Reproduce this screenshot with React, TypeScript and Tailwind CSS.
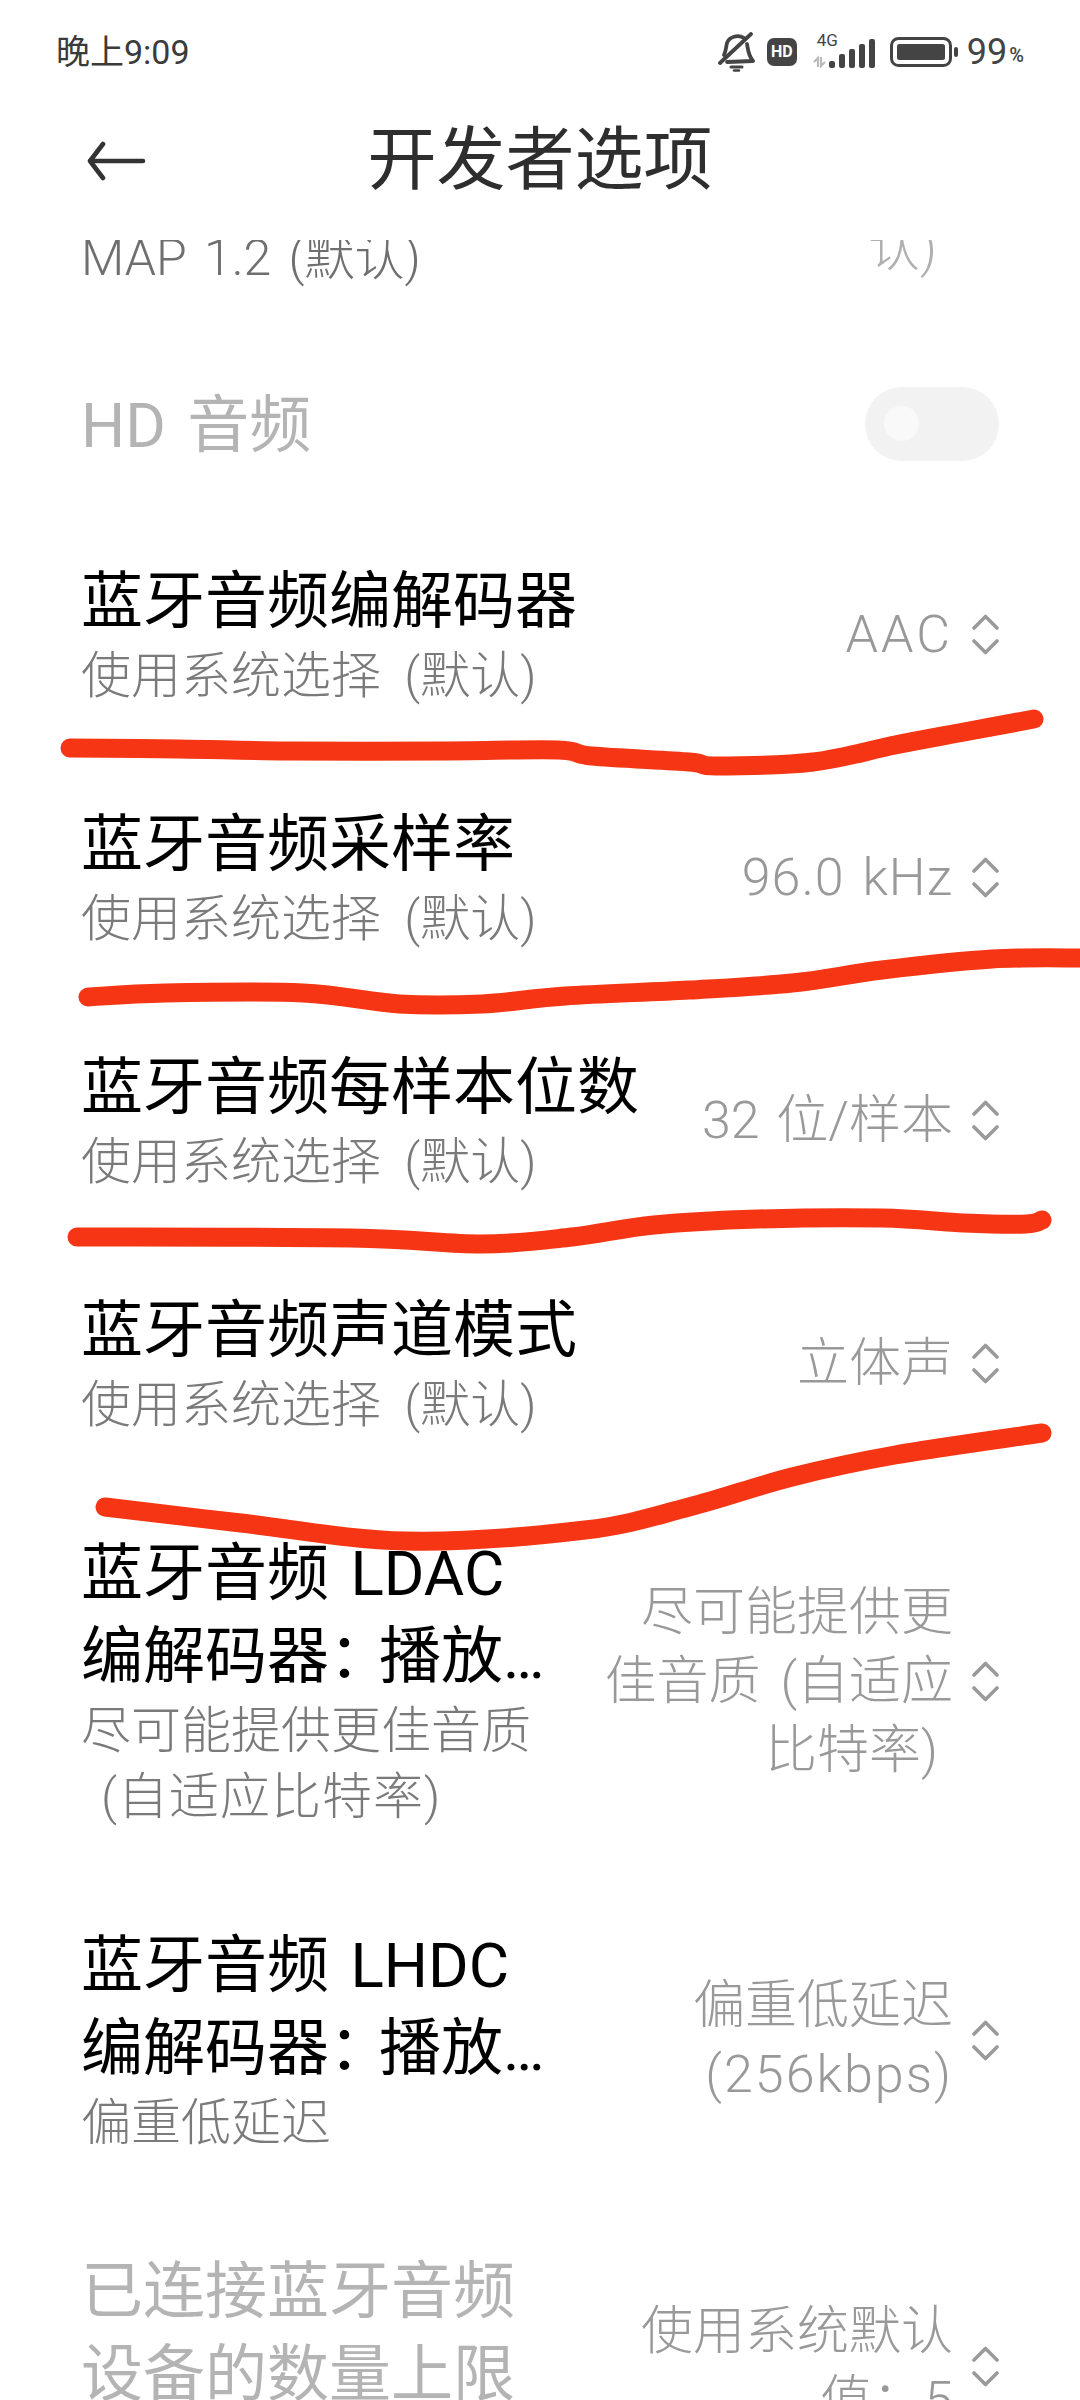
import React from "react";

const FONT = "font-['Roboto','Noto_Sans_CJK_SC',sans-serif]";

// smooth line through hand-traced points, for the marker strokes
function smooth(points: number[][]) {
  let d = `M${points[0][0]} ${points[0][1]}`;
  for (let i = 0; i < points.length - 1; i++) {
    const p0 = points[i - 1] || points[i];
    const p1 = points[i];
    const p2 = points[i + 1];
    const p3 = points[i + 2] || p2;
    const c1x = p1[0] + (p2[0] - p0[0]) / 6;
    const c1y = p1[1] + (p2[1] - p0[1]) / 6;
    const c2x = p2[0] - (p3[0] - p1[0]) / 6;
    const c2y = p2[1] - (p3[1] - p1[1]) / 6;
    d += ` C${c1x} ${c1y} ${c2x} ${c2y} ${p2[0]} ${p2[1]}`;
  }
  return d;
}

const STROKES = [
  [[70, 748], [179, 749], [289, 751], [441, 751], [558, 750], [592, 756], [689, 762], [716, 766], [813, 762], [895, 745], [964, 732], [1034, 719]],
  [[88, 997], [165, 993], [303, 993], [399, 1004], [482, 1004], [565, 996], [689, 990], [792, 983], [882, 970], [992, 959], [1085, 958]],
  [[77, 1237], [351, 1238], [482, 1244], [572, 1237], [654, 1225], [758, 1219], [882, 1218], [964, 1223], [1026, 1224], [1042, 1220]],
  [[105, 1507], [241, 1523], [406, 1541], [585, 1530], [689, 1507], [792, 1477], [895, 1455], [1042, 1433]],
];

function Chevrons() {
  return (
    <svg width="27" height="41" viewBox="0 0 27 41" fill="none" className="shrink-0">
      <path d="M2 14 L13.5 2.5 L25 14" stroke="#9a9a9a" strokeWidth="3.6" strokeLinecap="round" strokeLinejoin="round" />
      <path d="M2 27 L13.5 38.5 L25 27" stroke="#9a9a9a" strokeWidth="3.6" strokeLinecap="round" strokeLinejoin="round" />
    </svg>
  );
}

function DefaultSub() {
  return <>使用系统选择 (默认)</>;
}

function Row({
  title,
  sub,
  value,
  disabled,
}: {
  title: React.ReactNode;
  sub?: React.ReactNode;
  value: React.ReactNode;
  disabled?: boolean;
}) {
  return (
    <div className="flex items-center pl-[81px] pr-[81px] py-[47px]">
      <div className="mr-[38px] min-w-0 flex-1">
        <div className={`line-clamp-2 text-[62px] leading-[83px] [word-spacing:6px] ${disabled ? "text-[#b4b4b4]" : "text-black"}`}>
          {title}
        </div>
        {sub && <div className="text-[50px] leading-[66px] font-light text-[#7a7a7a] [word-spacing:11px]">{sub}</div>}
      </div>
      <div className="flex shrink-0 items-center gap-[19px]">
        <div className="max-w-[352px] text-right text-[52px] leading-[69px] font-light text-[#999999] [word-spacing:4px]">{value}</div>
        <Chevrons />
      </div>
    </div>
  );
}

function StatusBar() {
  return (
    <div className="flex h-[104px] items-center justify-between pl-[56px] pr-[56px] text-[#3a3a3a]">
      <div className="text-[34px] leading-[40px]">晚上9:09</div>
      <div className="flex items-center">
        <svg width="37" height="40" viewBox="0 0 37 40" fill="none" stroke="#444" strokeWidth="3.8" strokeLinecap="round" strokeLinejoin="round">
          <path d="M6 23 C8 19 8 15 9 11 C11 5 20 2 26 6" />
          <path d="M29 12 C30 17 30 23 35 29 L9 30" />
          <path d="M2 31 L33 2" />
          <path d="M13 35 H24" strokeWidth="3" />
          <path d="M16 38.5 H21" strokeWidth="2.4" />
        </svg>
        <div className="ml-[12px] flex h-[28px] w-[30px] items-center justify-center rounded-[7px] bg-[#444] text-[16px] leading-none font-bold text-white">
          HD
        </div>
        <div className="relative ml-[16px] h-[34px] w-[62px]">
          <div className="absolute top-[-4px] left-[4px] text-[17px] leading-[18px] text-[#444]">4G</div>
          <svg width="62" height="34" viewBox="0 0 62 34" className="absolute top-0 left-0">
            <path d="M5 32 V23 L1 27 M8 22 V31 L12 27" stroke="#bbb" strokeWidth="2.2" fill="none" />
            <rect x="16" y="26" width="6" height="7" rx="2" fill="#444" />
            <rect x="26" y="19" width="6" height="14" rx="2" fill="#444" />
            <rect x="36" y="14" width="6" height="19" rx="2" fill="#444" />
            <rect x="46" y="9" width="6" height="24" rx="2" fill="#444" />
            <rect x="56" y="4" width="6" height="29" rx="2" fill="#444" />
          </svg>
        </div>
        <svg width="68" height="30" viewBox="0 0 68 30" className="ml-[15px]">
          <rect x="1.5" y="1.5" width="59" height="27" rx="7" fill="none" stroke="#444" strokeWidth="3" />
          <rect x="7" y="7" width="48" height="16" rx="2.5" fill="#444" />
          <rect x="64" y="10" width="4" height="10" rx="2" fill="#444" />
        </svg>
        <div className="ml-[9px] text-[36px] leading-[40px] text-[#444]">99</div>
        <div className="mt-[6px] ml-[2px] text-[20px] leading-[24px] font-medium text-[#444]">%</div>
      </div>
    </div>
  );
}

function Header() {
  return (
    <div className="flex h-[136px] items-center pb-[22px] pl-[86px] pr-[86px]">
      <svg width="60" height="40" viewBox="0 0 60 40" fill="none" stroke="#333" strokeWidth="4.6" strokeLinecap="round" strokeLinejoin="round" className="shrink-0">
        <path d="M57 20 H4 M17 3 L4 20 L17 37" />
      </svg>
      <div className="flex-1 text-center text-[69px] leading-[90px] text-[#2e2e2e]">开发者选项</div>
      <div className="w-[60px] shrink-0" />
    </div>
  );
}

export default function App() {
  return (
    <div className={`relative h-[2400px] w-[1080px] overflow-hidden bg-white ${FONT}`}>
      <StatusBar />
      <Header />

      {/* previous row, scrolled most of the way under the header */}
      <div className="h-[97px] overflow-hidden">
        <div className="-mt-[15px] flex items-start justify-between pl-[81px] pr-[143px]">
          <div className="text-[50px] leading-[66px] font-light text-[#6f6f6f] [word-spacing:5px]">MAP 1.2 (默认)</div>
          <div className="text-[52px] leading-[48px] font-light text-[#b0b0b0]">认)</div>
        </div>
      </div>

      <div className="flex h-[176px] items-center justify-between pl-[81px] pr-[81px]">
        <div className="text-[62px] leading-[83px] text-[#b4b4b4] [word-spacing:6px]">HD 音频</div>
        <div className="mb-[3px] flex h-[74px] w-[134px] items-center rounded-full bg-[#f2f2f2] pl-[19px]">
          <div className="h-[35px] w-[35px] rounded-full bg-[#f9f9f9]" />
        </div>
      </div>

      <Row title="蓝牙音频编解码器" sub={<DefaultSub />} value={<span className="tracking-[3px]">AAC</span>} />
      <Row title="蓝牙音频采样率" sub={<DefaultSub />} value={<span className="tracking-[1px]">96.0 kHz</span>} />
      <Row title="蓝牙音频每样本位数" sub={<DefaultSub />} value="32 位/样本" />
      <Row title="蓝牙音频声道模式" sub={<DefaultSub />} value="立体声" />
      <Row
        title={
          <>
            蓝牙音频 LDAC 编解码器<span className="tracking-[-12px]">：</span>播放质量
          </>
        }
        sub={
          <>
            尽可能提供更佳音质<span className="pl-[20px] tracking-[1px]">(自适应比特率)</span>
          </>
        }
        value={
          <>
            尽可能提供更佳音质<span className="pl-[20px] pr-[15px]">(自适应比特率)</span>
          </>
        }
      />
      <Row
        title={
          <>
            蓝牙音频 LHDC 编解码器<span className="tracking-[-12px]">：</span>播放质量
          </>
        }
        sub="偏重低延迟"
        value={
          <>
            偏重低延迟 <span className="tracking-[2px]">(256kbps)</span>
          </>
        }
      />
      <Row title="已连接蓝牙音频设备的数量上限" sub="使用系统默认值：5" value="使用系统默认值：5" disabled />

      {/* red marker strokes drawn on top of the screenshot */}
      <svg width="1080" height="2400" viewBox="0 0 1080 2400" fill="none" stroke="#f53513" strokeWidth="19" strokeLinecap="round" strokeLinejoin="round" className="absolute top-0 left-0">
        {STROKES.map((pts, i) => (
          <path key={i} d={smooth(pts)} />
        ))}
      </svg>
    </div>
  );
}
